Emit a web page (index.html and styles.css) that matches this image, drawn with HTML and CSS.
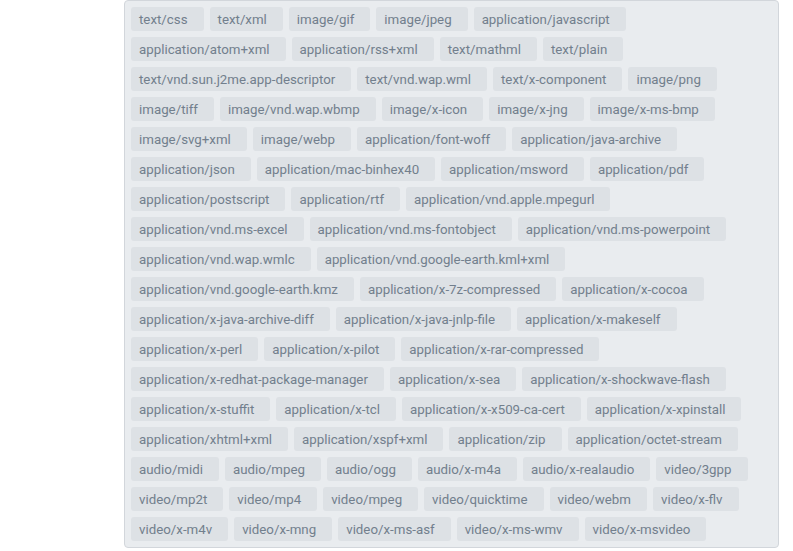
FILE: index.html
```html
<!DOCTYPE html>
<html>
<head>
<meta charset="utf-8">
<link rel="stylesheet" href="styles.css">
</head>
<body>
<div class="layout">
  <div class="side"></div>
  <div class="tags">
    <span class="tag">text/css</span>
    <span class="tag">text/xml</span>
    <span class="tag">image/gif</span>
    <span class="tag">image/jpeg</span>
    <span class="tag">application/javascript</span>
    <span class="tag">application/atom+xml</span>
    <span class="tag">application/rss+xml</span>
    <span class="tag">text/mathml</span>
    <span class="tag">text/plain</span>
    <span class="tag">text/vnd.sun.j2me.app-descriptor</span>
    <span class="tag">text/vnd.wap.wml</span>
    <span class="tag">text/x-component</span>
    <span class="tag">image/png</span>
    <span class="tag">image/tiff</span>
    <span class="tag">image/vnd.wap.wbmp</span>
    <span class="tag">image/x-icon</span>
    <span class="tag">image/x-jng</span>
    <span class="tag">image/x-ms-bmp</span>
    <span class="tag">image/svg+xml</span>
    <span class="tag">image/webp</span>
    <span class="tag">application/font-woff</span>
    <span class="tag">application/java-archive</span>
    <span class="tag">application/json</span>
    <span class="tag">application/mac-binhex40</span>
    <span class="tag">application/msword</span>
    <span class="tag">application/pdf</span>
    <span class="tag">application/postscript</span>
    <span class="tag">application/rtf</span>
    <span class="tag">application/vnd.apple.mpegurl</span>
    <span class="tag">application/vnd.ms-excel</span>
    <span class="tag">application/vnd.ms-fontobject</span>
    <span class="tag">application/vnd.ms-powerpoint</span>
    <span class="tag">application/vnd.wap.wmlc</span>
    <span class="tag">application/vnd.google-earth.kml+xml</span>
    <span class="tag">application/vnd.google-earth.kmz</span>
    <span class="tag">application/x-7z-compressed</span>
    <span class="tag">application/x-cocoa</span>
    <span class="tag">application/x-java-archive-diff</span>
    <span class="tag">application/x-java-jnlp-file</span>
    <span class="tag">application/x-makeself</span>
    <span class="tag">application/x-perl</span>
    <span class="tag">application/x-pilot</span>
    <span class="tag">application/x-rar-compressed</span>
    <span class="tag">application/x-redhat-package-manager</span>
    <span class="tag">application/x-sea</span>
    <span class="tag">application/x-shockwave-flash</span>
    <span class="tag">application/x-stuffit</span>
    <span class="tag">application/x-tcl</span>
    <span class="tag">application/x-x509-ca-cert</span>
    <span class="tag">application/x-xpinstall</span>
    <span class="tag">application/xhtml+xml</span>
    <span class="tag">application/xspf+xml</span>
    <span class="tag">application/zip</span>
    <span class="tag">application/octet-stream</span>
    <span class="tag">audio/midi</span>
    <span class="tag">audio/mpeg</span>
    <span class="tag">audio/ogg</span>
    <span class="tag">audio/x-m4a</span>
    <span class="tag">audio/x-realaudio</span>
    <span class="tag">video/3gpp</span>
    <span class="tag">video/mp2t</span>
    <span class="tag">video/mp4</span>
    <span class="tag">video/mpeg</span>
    <span class="tag">video/quicktime</span>
    <span class="tag">video/webm</span>
    <span class="tag">video/x-flv</span>
    <span class="tag">video/x-m4v</span>
    <span class="tag">video/x-mng</span>
    <span class="tag">video/x-ms-asf</span>
    <span class="tag">video/x-ms-wmv</span>
    <span class="tag">video/x-msvideo</span>
  </div>
</div>
</body>
</html>
```
FILE: styles.css
```css
html, body {
  margin: 0;
  padding: 0;
  background: #ffffff;
}

.layout {
  display: grid;
  grid-template-columns: 124px 655px;
  align-items: start;
}

.tags {
  box-sizing: border-box;
  display: flex;
  flex-wrap: wrap;
  align-content: flex-start;
  gap: 6px;
  padding: 6px;
  background: #e9ecef;
  border: 1px solid #d2d6db;
  border-radius: 4px;
}

.tag {
  display: flex;
  align-items: center;
  height: 24px;
  padding: 0 16px 0 8px;
  background: #dde1e5;
  border-radius: 3px;
  color: #727f8d;
  font-family: Roboto, "Liberation Sans", sans-serif;
  font-size: 13.3px;
  white-space: nowrap;
}
```
